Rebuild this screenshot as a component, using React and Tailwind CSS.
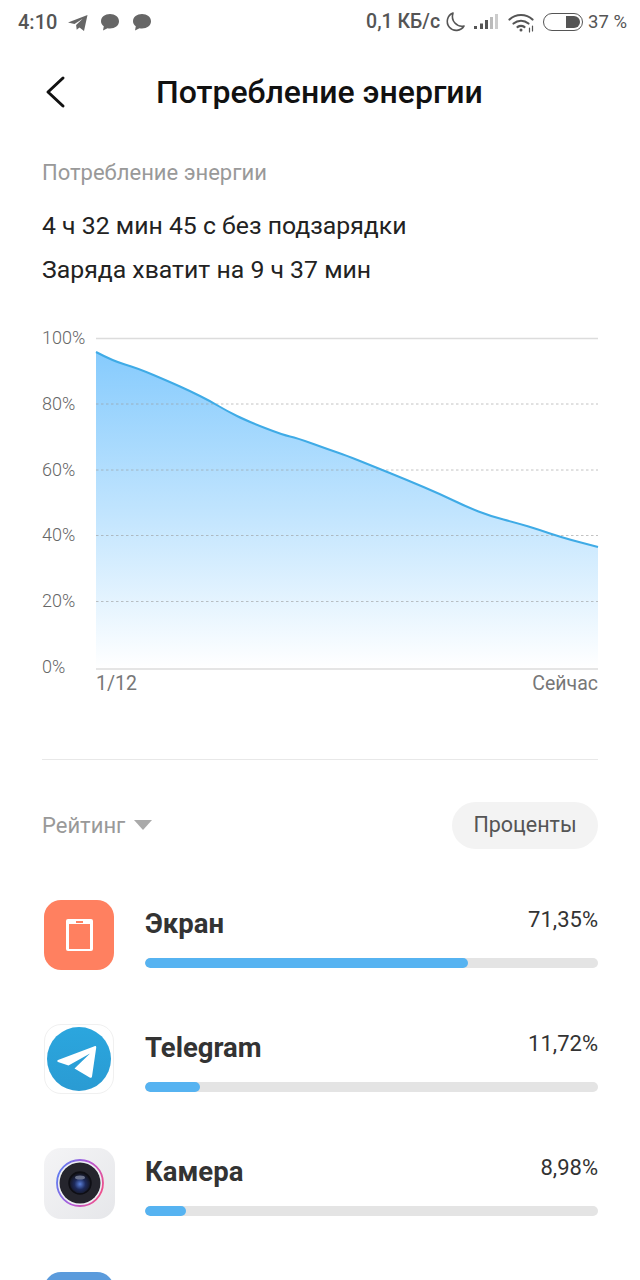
const curve = "96,352 113,361 137,368 170,382 190,391 210,401 227,411 247,421 283,435 297,438 330,450 345,455 375,467 407,480 440,494 467,507 490,516 517,523 540,530 560,537 598,547";
const P = curve.split(" ").map((p) => { const [x, y] = p.split(",").map(Number); return [x - 96, y - 338]; });
const smooth = () => {
  let d = `M${P[0][0]},${P[0][1]}`;
  for (let i = 1; i < P.length - 1; i++) {
    const mx = (P[i][0] + P[i + 1][0]) / 2;
    const my = (P[i][1] + P[i + 1][1]) / 2;
    d += ` Q${P[i][0]},${P[i][1]} ${mx},${my}`;
  }
  const l = P[P.length - 1];
  return d + ` L${l[0]},${l[1]}`;
};
const line = smooth();

function StatusBar() {
  return (
    <div className="h-[44px] flex items-center justify-between pl-[18px] pr-[13px] text-[#555]">
      <div className="flex items-center">
        <span className="text-[20px] font-medium leading-none">4:10</span>
        <svg className="ml-[10px]" width="22" height="20" viewBox="0 0 22 20"><path d="M1 10.500 20.500 3 17 19l-4.500-3.500-2.800 2.300-.6-4.800 6.600-6.200-8.200 5.200Z" fill="#666" /></svg>
        <svg className="ml-[11px]" width="20" height="20" viewBox="0 0 20 20"><path d="M10 2c5 0 9 3 9 7.300s-4 7.200-9 7.200c-.9 0-1.700-.1-2.500-.3L3 18.500l.8-4.200C2 13 1 11.300 1 9.300C1 5 5 2 10 2Z" fill="#666" /></svg>
        <svg className="ml-[12px]" width="20" height="20" viewBox="0 0 20 20"><path d="M10 2c5 0 9 3 9 7.300s-4 7.200-9 7.200c-.9 0-1.700-.1-2.500-.3L3 18.500l.8-4.200C2 13 1 11.300 1 9.300C1 5 5 2 10 2Z" fill="#666" /></svg>
      </div>
      <div className="flex items-center">
        <span className="text-[19.500px] font-medium leading-none">0,1 КБ/с</span>
        <svg className="ml-[4px]" width="22" height="22" viewBox="0 0 22 22"><path d="M9 2a9 9 0 1 0 11 13C13 16.500 6.500 10 9 2Z" fill="none" stroke="#555" strokeWidth="1.600" strokeLinejoin="round" /></svg>
        <svg className="ml-[7px]" width="26" height="18" viewBox="0 0 26 18">
          <rect x="1" y="13" width="3" height="3" fill="#555" />
          <rect x="7" y="10.500" width="3" height="5.500" fill="#555" />
          <rect x="12" y="7" width="3" height="9" fill="#555" />
          <rect x="17" y="4" width="3" height="12" fill="#bbb" />
          <rect x="22" y="1" width="3" height="15" fill="#ccc" />
        </svg>
        <svg className="ml-[9px]" width="27" height="22" viewBox="0 0 27 22" fill="none" stroke="#555" strokeWidth="2.200" strokeLinecap="round">
          <path d="M1.500 8.500C8 2.500 18 2.500 24.500 8.500" />
          <path d="M5.500 12.500c4.500-3.700 10.500-3.700 15 0" />
          <path d="M9.500 16c2.300-1.500 4.700-1.500 7 0" />
          <circle cx="13" cy="19" r="1.500" fill="#555" stroke="none" />
          <path d="M21.500 17v4M24.500 15v5" strokeWidth="1.200" />
        </svg>
        <div className="ml-[8px] w-[40px] h-[18px] rounded-full border-[1.500px] border-[#555] flex items-center justify-end pr-[2px]">
          <div className="w-[14px] h-[12px] bg-[#555] rounded-r-full rounded-l-[2px]" />
        </div>
        <span className="ml-[5px] text-[18.500px] leading-none">37 %</span>
      </div>
    </div>
  );
}

function Chart() {
  return (
    <div className="mt-[46px]">
      <div className="flex h-[331px]">
        <div className="w-[54px] -my-[11px] h-[351px] flex flex-col justify-between text-[18px] font-light leading-[22px] text-[#666] shrink-0">
          {["100%", "80%", "60%", "40%", "20%", "0%"].map((l) => (
            <div key={l}>{l}</div>
          ))}
        </div>
        <svg width="502" height="332" viewBox="0 0 502 332" className="block shrink-0 overflow-visible">
          <defs>
            <linearGradient id="fill" x1="0" y1="14" x2="0" y2="330" gradientUnits="userSpaceOnUse">
              <stop offset="0" stopColor="#86cbfd" />
              <stop offset="0.5" stopColor="#c0e4fe" />
              <stop offset="1" stopColor="#ffffff" />
            </linearGradient>
          </defs>
          <path d={`${line} L502,331 L0,331 Z`} fill="url(#fill)" />
          <line x1="0" x2="502" y1="0.500" y2="0.500" stroke="#dcdcdc" strokeWidth="1.500" />
          {[66, 132, 197.500, 263.500].map((y) => (
            <line key={y} x1="0" x2="502" y1={y} y2={y} stroke="#9a9a9a" strokeOpacity="0.600" strokeWidth="1" strokeDasharray="2.500 2.500" />
          ))}
          <line x1="0" x2="502" y1="331" y2="331" stroke="#dcdcdc" strokeWidth="1.500" />
          <path d={line} fill="none" stroke="#3fabe6" strokeWidth="2" strokeLinejoin="round" />
        </svg>
      </div>
      <div className="ml-[54px] flex justify-between text-[19.500px] leading-[22px] text-[#777] mt-[4px]">
        <span>1/12</span>
        <span>Сейчас</span>
      </div>
    </div>
  );
}

const ScreenIcon = () => (
  <div className="w-[70px] h-[70px] rounded-[17px] bg-[#ff8060] flex items-center justify-center">
    <div className="w-[27px] h-[32px] bg-white rounded-[2px] pt-[4px] px-[3px] pb-[2px] flex flex-col items-center">
      <div className="w-[7px] h-[1.500px] bg-[#ff8060] mb-[1px] -mt-[2px]" />
      <div className="w-full flex-1 bg-[#ff8060]" />
    </div>
  </div>
);

const TelegramIcon = () => (
  <div className="w-[70px] h-[70px] rounded-[17px] bg-white border border-[#f0f0f0] flex items-center justify-center">
    <svg width="64" height="64" viewBox="0 0 64 64">
      <defs>
        <linearGradient id="tg" x1="0" y1="0" x2="0" y2="1">
          <stop offset="0" stopColor="#2ba6de" />
          <stop offset="1" stopColor="#2a9bd3" />
        </linearGradient>
      </defs>
      <circle cx="32" cy="32" r="32" fill="url(#tg)" />
      <path d="M11 33 47.500 19.200c1.200-.4 1.900.2 1.700 1.500L45 49.500c-.2 1.300-1.200 1.600-2.300 1L27.500 41.500 43 26.500 21.500 38.500 11 35c-1-.4-1-1.600 0-2Z" fill="#fff" />
    </svg>
  </div>
);

const CameraIcon = () => (
  <div className="w-[71px] h-[71px] rounded-[17px] bg-gradient-to-br from-[#f4f4f6] to-[#e6e7ea] flex items-center justify-center">
    <svg width="52" height="52" viewBox="0 0 52 52">
      <defs>
        <linearGradient id="ring" x1="0" y1="0.300" x2="1" y2="0.700">
          <stop offset="0" stopColor="#5f7cf0" />
          <stop offset="0.500" stopColor="#b35ad8" />
          <stop offset="1" stopColor="#f0508a" />
        </linearGradient>
        <radialGradient id="lens" cx="0.500" cy="0.550" r="0.500">
          <stop offset="0" stopColor="#5a7fd8" />
          <stop offset="0.500" stopColor="#1d2a5c" />
          <stop offset="1" stopColor="#14141c" />
        </radialGradient>
      </defs>
      <circle cx="26" cy="26" r="23" fill="#eef0f4" stroke="url(#ring)" strokeWidth="1.800" />
      <circle cx="26" cy="26" r="20.500" fill="#25252d" />
      <circle cx="26" cy="26" r="11" fill="url(#lens)" stroke="#0e0e14" strokeWidth="1.500" />
      <ellipse cx="26" cy="20.500" rx="5" ry="2" fill="#8c93a8" opacity="0.700" />
    </svg>
  </div>
);

function AppRow({ icon, name, value, pct }) {
  return (
    <div className="flex items-center h-[70px]">
      <div className="w-[103px] shrink-0 pl-[2px]">{icon}</div>
      <div className="flex-1 min-w-0">
        <div className="flex justify-between items-start h-[56px]">
          <span className="text-[27.500px] leading-[44px] font-bold text-[#333]">{name}</span>
          <span className="text-[22px] leading-[36px] text-[#333]">{value}</span>
        </div>
        <div className="h-[10px] rounded-full bg-[#e4e4e4] overflow-hidden">
          <div className="h-full rounded-full bg-[#56b3f1]" style={{ width: pct }} />
        </div>
      </div>
    </div>
  );
}

export default function App() {
  return (
    <div className="w-[640px] h-[1280px] overflow-hidden bg-white font-['Roboto',sans-serif]">
      <StatusBar />
      <div className="h-[96px] flex items-center px-[42px]">
        <svg width="24" height="36" viewBox="0 0 24 36" className="shrink-0 ml-[2px]" fill="none" stroke="#111" strokeWidth="3" strokeLinecap="round" strokeLinejoin="round">
          <path d="M19 4 4 18l15 14" />
        </svg>
        <h1 className="ml-[88px] text-[32px] font-medium leading-none text-[#111] whitespace-nowrap">Потребление энергии</h1>
      </div>
      <div className="px-[42px]">
        <div className="mt-[18px] text-[22px] leading-[30px] text-[#999]">Потребление энергии</div>
        <div className="mt-[16px] text-[24.800px] leading-[44px] text-[#222]">
          <div>4 ч 32 мин 45 с без подзарядки</div>
          <div>Заряда хватит на 9 ч 37 мин</div>
        </div>
        <Chart />
        <div className="mt-[64px] h-px bg-[#e8e8e8]" />
        <div className="mt-[41px] flex items-center justify-between h-[48px]">
          <div className="flex items-center text-[22px] text-[#999]">
            <span>Рейтинг</span>
            <div className="ml-[9px] w-0 h-0 border-l-[9px] border-r-[9px] border-t-[10px] border-l-transparent border-r-transparent border-t-[#aaa]" />
          </div>
          <div className="w-[146px] h-[47px] rounded-full bg-[#f3f3f3] flex items-center justify-center text-[21.500px] text-[#555]">Проценты</div>
        </div>
        <div className="mt-[51px] flex flex-col gap-[54px]">
          <AppRow icon={<ScreenIcon />} name="Экран" value="71,35%" pct="71.300%" />
          <AppRow icon={<TelegramIcon />} name="Telegram" value="11,72%" pct="12.100%" />
          <AppRow icon={<CameraIcon />} name="Камера" value="8,98%" pct="9%" />
          <div className="pl-[2px]"><div className="w-[70px] h-[70px] rounded-[17px] bg-[#5b9bdc]" /></div>
        </div>
      </div>
    </div>
  );
}
